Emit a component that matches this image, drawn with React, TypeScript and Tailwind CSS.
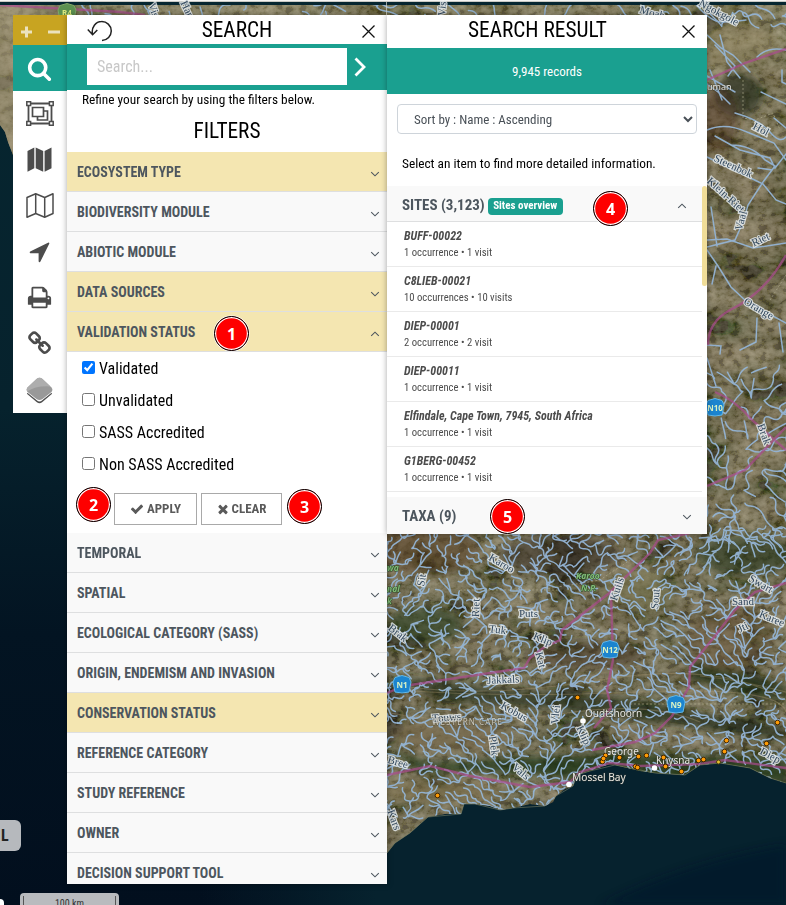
import React from "react";

const CONDENSED = "font-['Roboto_Condensed','Roboto',sans-serif] font-stretch-condensed";

/* ---------- seeded helpers for the river network ---------- */
function makeRandom(seed: number) {
  let s = seed;
  return () => {
    s = (s * 1664525 + 1013904223) % 4294967296;
    return s / 4294967296;
  };
}

function drainage(x0: number, y0: number, x1: number, y1: number, step: number, seed: number, keep: number) {
  const rnd = makeRandom(seed);
  const cols = Math.ceil((x1 - x0) / step) + 1;
  const rows = Math.ceil((y1 - y0) / step) + 1;
  const nodes: { x: number; y: number; h: number }[] = [];
  for (let r = 0; r < rows; r++)
    for (let c = 0; c < cols; c++) {
      const x = x0 + c * step + (rnd() - 0.5) * step * 0.8;
      const y = y0 + r * step + (rnd() - 0.5) * step * 0.8;
      const h = Math.sin(x / 31) * 1.6 + Math.cos(y / 37 + x / 80) * 1.4 - y / 70 + rnd() * 1.3;
      nodes.push({ x, y, h });
    }
  let d = "";
  for (let r = 0; r < rows; r++)
    for (let c = 0; c < cols; c++) {
      const n = nodes[r * cols + c];
      let best = n;
      for (let dr = -1; dr <= 1; dr++)
        for (let dc = -1; dc <= 1; dc++) {
          const rr = r + dr;
          const cc = c + dc;
          if (rr < 0 || cc < 0 || rr >= rows || cc >= cols) continue;
          const m = nodes[rr * cols + cc];
          if (m.h < best.h) best = m;
        }
      if (best === n || rnd() > keep) continue;
      const dx = best.x - n.x;
      const dy = best.y - n.y;
      const k = (rnd() - 0.5) * 0.7;
      d += `M${n.x.toFixed(1)} ${n.y.toFixed(1)}q${(dx * 0.3 - dy * k).toFixed(1)} ${(dy * 0.3 + dx * k).toFixed(1)} ${(dx * 0.6).toFixed(1)} ${(dy * 0.55).toFixed(1)}T${best.x.toFixed(1)} ${best.y.toFixed(1)}`;
    }
  return d;
}

const southRivers = drainage(385, 528, 792, 815, 9, 7, 0.97);
const topRivers = drainage(70, 2, 792, 20, 13, 19, 0.4);
const eastRivers = drainage(704, 370, 792, 540, 13, 23, 0.7);

const LAND =
  "M387 5H786V783L770 778 750 768 720 763 700 765 685 775 655 773 640 771 615 765 607 765 590 771 577 775 573 786 565 789 556 796 553 802 545 806 530 804 513 808 500 810 490 806 475 804 464 804 461 814 445 814 428 817 410 833 395 843 387 853ZM0 5H387V20H40L13 155 8 142 5 132 0 125Z";

type River = [number, number, number, string];
const riverNames: River[] = [
  [490, 556, 30, "Karoo"], [420, 586, -80, "Sit"], [475, 617, -88, "Riet"], [519, 613, 0, "Puts"],
  [489, 628, 8, "Tuk"], [534, 635, 22, "Klip"], [539, 652, 75, "Kat"], [487, 680, -3, "Jakkals"],
  [613, 600, -72, "Kuils"], [654, 609, -85, "Sout"], [732, 601, 0, "Sand"], [750, 577, 30, "Swart"],
  [760, 613, 22, "Karee"], [738, 629, -25, "Jti"], [390, 626, 38, "Brak"], [432, 718, -4, "Touws"],
  [502, 704, 30, "Kobus"], [554, 724, -84, "Vlei"], [493, 736, 82, "Plek"], [580, 726, 65, "Klip"],
  [388, 759, 15, "Bree"], [514, 765, 40, "Vals"], [761, 750, 28, "Diep"], [391, 810, 70, "Kars"],
  [700, 2, 28, "Ngokgole"], [754, 125, 28, "Hol"], [715, 157, 25, "Steenbok"], [709, 179, 42, "Klein-Riet"],
  [738, 230, -75, "Vaal"], [752, 243, -25, "Riet"], [745, 300, 30, "Orange"], [761, 424, 70, "Brak"],
  [640, 9, 15, "Moab"], [152, 3, 72, "Vis"], [184, 1, 65, "Ham"], [441, 16, -85, "Vis"],
];

const sites: [number, number][] = [
  [577, 697], [437, 795], [605, 755], [602, 761], [603, 758], [619, 757], [638, 756], [646, 755], [663, 757],
  [665, 766], [635, 766], [637, 767], [681, 771], [698, 760], [703, 759], [724, 751], [726, 740], [766, 743], [777, 722],
];

function Shield({ x, y, label, green = false }: { x: number; y: number; label: string; green?: boolean }) {
  return (
    <g transform={`translate(${x} ${y})`}>
      <path
        d="M-7-7.500L0-9.500 7-7.500 9-3 7 7Q0 9-7 7L-9-3Z"
        fill={green ? "#5c9150" : "#1b84cf"}
        stroke={green ? "#7fa567" : "#62b6e6"}
        strokeWidth="1"
      />
      <text y="2.500" textAnchor="middle" className="font-['Noto_Sans',sans-serif] text-[8px] font-bold" fill={green ? "#dce97f" : "#d9f2c4"}>
        {label}
      </text>
    </g>
  );
}

function MapCanvas() {
  return (
    <svg className="absolute inset-0" width="786" height="905" viewBox="0 0 786 905">
      <defs>
        <linearGradient id="sea" x1="0" y1="0" x2="0" y2="1">
          <stop offset="0" stopColor="#062630" />
          <stop offset=".45" stopColor="#06222d" />
          <stop offset=".7" stopColor="#031422" />
          <stop offset="1" stopColor="#020f1e" />
        </linearGradient>
        <linearGradient id="shelf" x1="0" y1="0" x2="1" y2="0">
          <stop offset="0" stopColor="#06222e" stopOpacity="0" />
          <stop offset=".3" stopColor="#06222e" />
          <stop offset="1" stopColor="#06222e" />
        </linearGradient>
        <linearGradient id="soil" x1="0" y1="0" x2="0" y2="1">
          <stop offset="0" stopColor="#706a4c" />
          <stop offset=".2" stopColor="#554b33" />
          <stop offset=".5" stopColor="#5b523a" />
          <stop offset=".75" stopColor="#504a35" />
          <stop offset="1" stopColor="#57513b" />
        </linearGradient>
        <filter id="relief" x="0" y="0" width="100%" height="100%">
          <feTurbulence type="fractalNoise" baseFrequency="0.022 0.032" numOctaves="6" seed="11" />
          <feColorMatrix values="1.5 0 0 0 -.45  1.25 .15 0 0 -.43  .95 .1 0 0 -.37  0 0 0 0 1" />
        </filter>
        <filter id="grain" x="0" y="0" width="100%" height="100%">
          <feTurbulence type="fractalNoise" baseFrequency="0.12 0.16" numOctaves="4" seed="4" />
          <feColorMatrix values="1.8 0 0 0 -.6  1.8 0 0 0 -.6  1.6 0 0 0 -.6  0 0 0 0 1" />
        </filter>
        <filter id="soft" x="-20%" y="-50%" width="140%" height="200%">
          <feGaussianBlur stdDeviation="4" />
        </filter>
        <clipPath id="land">
          <path d={LAND} />
        </clipPath>
      </defs>
      <rect width="786" height="905" fill="url(#sea)" />
      <rect x="200" y="700" width="586" height="205" fill="url(#shelf)" />
      <path d="M600 905Q690 860 786 845V905Z" fill="#031729" opacity=".6" filter="url(#soft)" />
      <g clipPath="url(#land)">
        <rect width="786" height="905" fill="url(#soil)" />
        <rect width="786" height="905" filter="url(#relief)" opacity=".36" />
        <rect width="786" height="905" filter="url(#grain)" opacity=".2" />
        <rect x="0" y="0" width="60" height="160" fill="#a69a7b" opacity=".5" />
        <g filter="url(#soft)">
          <ellipse cx="738" cy="95" rx="24" ry="22" fill="#22291f" opacity=".65" />
          <ellipse cx="718" cy="120" rx="20" ry="32" fill="#51371f" opacity=".45" />
          <ellipse cx="730" cy="45" rx="50" ry="22" fill="#94875f" opacity=".35" />
          <ellipse cx="425" cy="550" rx="55" ry="25" fill="#54391f" opacity=".55" />
          <ellipse cx="425" cy="625" rx="38" ry="18" fill="#293b1d" opacity=".6" />
          <ellipse cx="560" cy="555" rx="60" ry="20" fill="#302c1b" opacity=".55" />
          <ellipse cx="640" cy="590" rx="35" ry="22" fill="#78744f" opacity=".55" />
          <ellipse cx="585" cy="655" rx="60" ry="14" fill="#403221" opacity=".5" />
          <ellipse cx="730" cy="640" rx="45" ry="28" fill="#67543a" opacity=".5" />
          <ellipse cx="745" cy="555" rx="50" ry="20" fill="#283820" opacity=".6" />
          <ellipse cx="450" cy="735" rx="60" ry="17" fill="#7b6d50" opacity=".65" />
          <ellipse cx="440" cy="792" rx="65" ry="12" fill="#7c6d49" opacity=".6" />
          <path d="M387 746L430 764 520 757 620 754 786 758V784H610L520 772 420 772Z" fill="#233919" opacity=".8" />
          <path d="M390 675L510 690 620 697 690 712 786 726V740L670 724 560 710 440 700Z" fill="#252f19" opacity=".7" />
          <path d="M690 660L786 685V702L690 680Z" fill="#263419" opacity=".8" />
        </g>
        <g fill="none" stroke="#b09c75" strokeWidth="1.2" opacity=".35">
          <path d="M390 684Q480 700 600 680T786 700M400 690Q500 698 640 692T786 712M390 713Q470 728 560 714T700 722M700 676Q740 680 786 692" />
        </g>
        <g fill="none" stroke="#b6b292" strokeWidth="1" strokeDasharray="2 2" opacity=".6">
          <path d="M743 80V118L755 120 773 113 780 130M786 275L770 300M540 590L600 580 630 560M630 704H786M460 590H560" />
        </g>
        <g fill="none" stroke="#94b4d4" strokeWidth="1.5" strokeLinecap="round" opacity=".95">
          <path d={southRivers} />
          <path d={topRivers} />
          <path d={eastRivers} />
          <path d="M694 2Q710 22 722 22T746 20M707 35L721 48 733 55 750 72M715 45L735 66 728 76M720 35L727 62 740 78M707 84L718 92 730 104M707 76L735 92M710 70L722 100M757 57Q768 46 786 50M761 92L786 104M782 70V82L786 84" />
          <path d="M735 113Q760 120 770 132T786 137M707 130Q725 122 747 132L774 143 786 160M715 136L740 150 770 158 775 168 786 154M731 145Q752 145 765 160L775 166M758 168L772 170M775 166L763 182 748 205 743 222 735 240 707 247M707 157L738 172 763 184M774 118L786 128M763 184L776 200 786 204" />
          <path d="M707 250L718 266 731 287 747 302 786 323M711 207L717 246M716 266L712 284M757 318L756 342 740 350M779 323L783 352M707 240L727 239 753 248 786 243M707 358L716 386M707 345L721 346 720 354" />
        </g>
        <g fill="none" stroke="#a94c8d" strokeWidth="2.4" opacity=".7">
          <path d="M387 693L404 686 470 676 524 668 530 658 543 648 560 640 562 630 608 594 650 553 658 540 690 533M611 594L613 660 607 690 611 708 594 728M786 583L755 592 735 610 715 636 690 667 689 687 672 716 655 733 635 742 592 750M387 775L430 766 470 776 530 787 570 782 580 772 610 763 640 766 700 764 725 760 786 768" />
          <path d="M0 5L120 12 145 15M707 80L745 63 786 49M786 255Q765 293 730 310 708 322 708 345M715 392Q735 400 752 420L786 450M707 486L745 470 786 427" />
        </g>
      </g>
      <path d="M786 783L770 778 750 768 720 763 700 765 685 775 655 773 615 765 590 771 577 775 573 786 556 796 545 806 513 808 500 810 475 804 464 804 461 814 428 817 410 833 395 843 387 853" fill="none" stroke="#82866a" strokeWidth="1" opacity=".55" />
      <path d="M0 .5H786" stroke="#f6f6f4" strokeWidth="1" />
      <path d="M0 1.500H786" stroke="#c9c9c4" strokeWidth="1" />
      <path d="M386.5 2V15" stroke="#d8d8d0" opacity=".7" />
      {riverNames.map(([x, y, a, name], i) => (
        <text
          key={i}
          transform={`translate(${x} ${y}) rotate(${a})`}
          y="4"
          className="font-['Liberation_Serif',serif] text-[11px]"
          fill="#33495e"
          stroke="#e4e9ea"
          strokeWidth="2.4"
          strokeOpacity=".85"
          paintOrder="stroke"
        >
          {name}
        </text>
      ))}
      <g className="font-['Noto_Sans',sans-serif] text-[8.5px] font-bold italic" fill="#83bd78" stroke="#284925" strokeWidth="1" paintOrder="stroke">
        <text x="576" y="579">Karoo</text>
        <text x="581" y="591">N.P.</text>
        <text x="387" y="571">wa</text>
        <text x="387" y="592">nal</text>
        <text x="387" y="604">k</text>
      </g>
      <g className="font-['Noto_Sans',sans-serif]" fill="#e6e6e0" stroke="#3a3a30" strokeWidth="1" strokeOpacity=".6" paintOrder="stroke">
        <text x="432" y="725" className="text-[8px] tracking-[1.1px]" opacity=".75">WESTERN CAPE</text>
        <text x="585" y="717" className="text-[10px]">Oudtshoorn</text>
        <text x="604" y="755" className="text-[10px]">George</text>
        <text x="656" y="764" className="text-[10px]">Knysna</text>
        <text x="572" y="781" className="text-[10.2px]">Mossel Bay</text>
        <text x="707" y="90" className="text-[9px]">uman</text>
      </g>
      <Shield x={402} y={685} label="N1" />
      <Shield x={610} y={650} label="N12" />
      <Shield x={676} y={705} label="N9" />
      <Shield x={715} y={408} label="N10" />
      <Shield x={67} y={13} label="R4" green />
      <g fill="#fff">
        <circle cx="583" cy="721" r="2.8" />
        <circle cx="569" cy="784.500" r="2.8" />
        <circle cx="654.500" cy="768" r="2.8" />
      </g>
      {sites.map(([x, y], i) => (
        <circle key={i} cx={x + 0.5} cy={y + 0.5} r="2.3" fill="#ff9c05" stroke="#3b2100" strokeWidth=".9" />
      ))}
      <circle cx="718.500" cy="762" r="2" fill="#e5c02d" stroke="#4c4010" />
    </svg>
  );
}

/* ---------- icons ---------- */
const GLYPH = {
  search: "M1216 832q0-185-131.5-316.5t-316.5-131.5-316.5 131.5-131.5 316.5 131.5 316.5 316.5 131.5 316.5-131.5 131.5-316.5zm512 832q0 52-38 90t-90 38q-54 0-90-38l-343-342q-179 124-399 124-143 0-273.5-55.5t-225-150-150-225-55.5-273.5 55.5-273.5 150-225 225-150 273.5-55.5 273.5 55.5 225 150 150 225 55.5 273.5q0 220-124 399l343 343q37 37 37 90z",
  arrow: "M1593 349l-640 1280q-17 35-57 35-5 0-15-2-22-5-35.5-22.5t-13.5-39.5v-576h-576q-22 0-39.5-13.5t-22.5-35.5 4-42 29-30l1280-640q13-7 29-7 27 0 45 19 15 14 18.5 34.5t-6.5 39.5z",
  print: "M448 1536h896v-256h-896v256zm0-640h896v-384h-160q-40 0-68-28t-28-68v-160h-640v640zm1152 64q0-26-19-45t-45-19-45 19-19 45 19 45 45 19 45-19 19-45zm128 0v416q0 13-9.5 22.5t-22.5 9.5h-224v160q0 40-28 68t-68 28h-960q-40 0-68-28t-28-68v-160h-224q-13 0-22.5-9.5t-9.5-22.5v-416q0-79 56.5-135.5t135.5-56.5h64v-544q0-40 28-68t68-28h672q40 0 88 20t76 48l152 152q28 28 48 76t20 88v256h64q79 0 135.5 56.5t56.5 135.5z",
  link: "M1520 1216q0-40-28-68l-208-208q-28-28-68-28-42 0-72 32 3 3 19 18.5t21.500 21.500 15 19 13 25.500 3.500 27.500q0 40-28 68t-68 28q-15 0-27.500-3.500t-25.500-13-19-15-21.500-21.500-18.500-19q-33 31-33 73 0 40 28 68l206 207q27 27 68 27 40 0 68-26l147-146q28-28 28-67zm-703-705q0-40-28-68l-206-207q-28-28-68-28-39 0-68 27l-147 146q-28 28-28 67 0 40 28 68l208 208q27 27 68 27 42 0 72-31-3-3-19-18.500t-21.500-21.500-15-19-13-25.500-3.500-27.500q0-40 28-68t68-28q15 0 27.500 3.500t25.500 13 19 15 21.500 21.500 18.500 19q33-31 33-73zm895 705q0 120-85 203l-147 146q-83 83-203 83-121 0-204-85l-206-207q-83-83-83-203 0-123 88-209l-88-88q-86 88-208 88-120 0-204-84l-208-208q-84-84-84-204t85-203l147-146q83-83 203-83 121 0 204 85l206 207q83 83 83 203 0 123-88 209l88 88q86-88 208-88 120 0 204 84l208 208q84 84 84 204z",
  check: "M1671 566q0 40-28 68l-724 724-136 136q-28 28-68 28t-68-28l-136-136-362-362q-28-28-28-68t28-68l136-136q28-28 68-28t68 28l294 295 656-657q28-28 68-28t68 28l136 136q28 28 28 68z",
  times: "M1490 1322q0 40-28 68l-136 136q-28 28-68 28t-68-28l-294-294-294 294q-28 28-68 28t-68-28l-136-136q-28-28-28-68t28-68l294-294-294-294q-28-28-28-68t28-68l136-136q28-28 68-28t68 28l294 294 294-294q28-28 68-28t68 28l136 136q28 28 28 68t-28 68l-294 294 294 294q28 28 28 68z",
};

function Glyph({ name, size }: { name: keyof typeof GLYPH; size: number }) {
  return (
    <svg width={size} height={size} viewBox="0 0 1792 1792" fill="currentColor" className="shrink-0">
      <path d={GLYPH[name]} />
    </svg>
  );
}

function Chevron({ up = false }: { up?: boolean }) {
  return (
    <svg width="10" height="6" viewBox="0 0 10 6" fill="none" stroke="#4d565e" strokeWidth="1.1" className="shrink-0">
      <path d={up ? "M1.200 4.800L5 1.200l3.800 3.600" : "M1.200 1.200L5 4.800l3.800-3.600"} />
    </svg>
  );
}

function Cross() {
  return (
    <svg width="13" height="13" viewBox="0 0 13 13" stroke="#111" strokeWidth="1.3">
      <path d="M.5.5l12 12M12.500.5l-12 12" />
    </svg>
  );
}

function Marker({ n, className }: { n: number; className: string }) {
  return (
    <div
      className={`absolute z-20 flex size-[35px] items-center justify-center rounded-full border-[1.5px] border-black bg-[#fe0000] font-['Noto_Sans',sans-serif] text-base font-bold text-white shadow-[inset_0_0_0_1.200px_#fff,0_0_0_0.5px_#fff] ${className}`}
    >
      {n}
    </div>
  );
}

function Toolbar() {
  const cell = "flex items-center justify-center pr-px";
  return (
    <nav className="flex h-[398px] w-[54px] flex-col bg-white text-[#4c4c4c]">
      <div className="flex h-[30px] items-center justify-around bg-[#c8a421] pt-1">
        <svg width="12" height="12" viewBox="0 0 12 12" stroke="#ebe2bd" strokeWidth="3">
          <path d="M0 6h11M5.500 .5v11" />
        </svg>
        <svg width="12" height="12" viewBox="0 0 12 12" stroke="#ebe2bd" strokeWidth="3">
          <path d="M0 6h12" />
        </svg>
      </div>
      <div className={`${cell} h-[46px] bg-[#1aa090] text-white`}>
        <Glyph name="search" size={25} />
      </div>
      <div className={`${cell} h-[46px] pb-0.5`}>
        <svg width="28" height="25" viewBox="0 0 28 25" fill="none" stroke="currentColor" strokeWidth="1.500">
          <path d="M4.500 2.500h19M4.500 22.500h19M2.500 4.500v16M25.500 4.500v16" strokeWidth="1.800" />
          <path d="M.8.8h3.800v3.800H.8zM23.400.8h3.800v3.800h-3.800zM.8 20.400h3.800v3.800H.8zM23.400 20.400h3.800v3.800h-3.800z" />
          <path d="M6.500 6.500h11v9h-11zM17.500 10h4v9h-10v-3.500" strokeWidth="1.700" />
        </svg>
      </div>
      <div className={`${cell} h-[46px] pb-0.5`}>
        <svg width="25" height="25" viewBox="0 0 25 25" fill="currentColor">
          <path d="M.5 4L7.300.5v20.700L.5 24.700zM8.700.5l7.500 3.500v20.700L8.700 21.200zM17.600 4L24.500.5v20.700l-6.900 3.500z" />
        </svg>
      </div>
      <div className={`${cell} h-[46px] pb-0.5`}>
        <svg width="28" height="25" viewBox="0 0 28 25" fill="none" stroke="currentColor" strokeWidth="1.500" strokeLinejoin="round">
          <path d="M1 4.500L9.700.8l9 3.700L27 .8v19.700l-8.300 3.700-9-3.700L1 24.200zM9.700.8v19.700M18.700 4.500v19.700" />
        </svg>
      </div>
      <div className={`${cell} h-[46px] pb-0.5`}>
        <Glyph name="arrow" size={25} />
      </div>
      <div className={`${cell} h-[45px]`}>
        <Glyph name="print" size={25} />
      </div>
      <div className={`${cell} h-[45px] pt-0.5`}>
        <Glyph name="link" size={25} />
      </div>
      <div className={`${cell} h-[48px] pt-0.5`}>
        <svg width="27" height="27" viewBox="0 0 27 27">
          <path d="M1.500 16l10 8.500q2 1.500 4 0l10-8.500" fill="none" stroke="#505050" strokeWidth="2" />
          <path d="M1.500 15l10 8q2 1.500 4 0l10-8" fill="none" stroke="#fff" strokeWidth="1.200" />
          <path d="M1.500 10.500l9-8.500q3-2.500 6 0l9 8.500q1.800 2.300 0 4.500l-9 7q-3 2.200-6 0l-9-7q-1.800-2.200 0-4.500z" fill="#999" />
          <path d="M1 11.300q0-.5.500-.8l9-8.500q3-2.500 6 0l8 7.500Q10 8.500 1.300 14.500.5 13 1 11.300z" fill="#adadad" />
        </svg>
      </div>
    </nav>
  );
}

function FilterRow({ label, gold, open }: { label: string; gold?: boolean; open?: boolean }) {
  return (
    <div className={`flex h-10 shrink-0 items-center justify-between border-b border-[#dedfe0] pl-2.5 pr-[7px] ${gold ? "bg-[#f4e6b1]" : "bg-[#f9f9f9]"}`}>
      <span className="text-[14px] font-bold leading-none text-[#4d565e]">{label}</span>
      <span className="pt-1">
        <Chevron up={open} />
      </span>
    </div>
  );
}

const statuses = ["Validated", "Unvalidated", "SASS Accredited", "Non SASS Accredited"];
const lower = ["TEMPORAL", "SPATIAL", "ECOLOGICAL CATEGORY (SASS)", "ORIGIN, ENDEMISM AND INVASION", "CONSERVATION STATUS", "REFERENCE CATEGORY", "STUDY REFERENCE", "OWNER", "DECISION SUPPORT TOOL"];

function SearchPanel() {
  return (
    <section className="relative flex h-[869px] w-80 flex-col overflow-hidden bg-white shadow-[0_0_6px_rgba(0,0,0,0.35)]">
      <header className="flex h-[29px] shrink-0 items-center justify-between pl-5 pr-3">
        <svg width="25" height="22" viewBox="0 0 25 22" fill="none" stroke="#222" strokeWidth="1.500" className="mt-0.5">
          <path d="M5.500 14.500C4 7 9 1.500 14.500 1.500A9 9 0 0 1 15 20.500M.8 9.500l4.800 5.200 4.700-4.800" />
        </svg>
        <h1 className="text-[21.330px] leading-none">SEARCH</h1>
        <div className="pt-[3px]"><Cross /></div>
      </header>
      <div className="flex h-[46px] shrink-0 items-start bg-[#1aa090] pl-5 pt-1">
        <input className="h-[37px] w-[260px] bg-white px-2.5 text-base outline-none placeholder:text-[#c8c8c8]" placeholder="Search..." />
        <svg width="12" height="20" viewBox="0 0 12 20" fill="none" stroke="#fff" strokeWidth="2.800" className="ml-[7px] mt-[9px]">
          <path d="M1.500 1.500L10 10l-8.500 8.500" />
        </svg>
      </div>
      <p className="mt-[3px] shrink-0 pl-[15px] text-[13.330px] leading-[14px]">Refine your search by using the filters below.</p>
      <h2 className="mt-[11px] h-[34px] shrink-0 text-center text-[21.330px] leading-[26px]">FILTERS</h2>
      <FilterRow label="ECOSYSTEM TYPE" gold />
      <FilterRow label="BIODIVERSITY MODULE" />
      <FilterRow label="ABIOTIC MODULE" />
      <FilterRow label="DATA SOURCES" gold />
      <FilterRow label="VALIDATION STATUS" gold open />
      <div className="h-[181px] shrink-0 pl-[15px]">
        {statuses.map((s, i) => (
          <label key={s} className="flex h-8 items-center gap-1 text-base">
            <input type="checkbox" defaultChecked={i === 0} className="mb-[2px] size-[13px]" />
            <span className="pt-0.5">{s}</span>
          </label>
        ))}
        <div className="mt-[13px] flex gap-1 pl-8 text-[13px] font-bold text-[#5a5a5a]">
          <button className="flex h-8 w-[83px] items-center justify-center gap-[3px] border border-[#a9a9a9]">
            <Glyph name="check" size={14} />APPLY
          </button>
          <button className="flex h-8 w-[81px] items-center justify-center gap-0.5 border border-[#a9a9a9] pr-px">
            <Glyph name="times" size={14} />CLEAR
          </button>
        </div>
      </div>
      {lower.map((l) => (
        <FilterRow key={l} label={l} gold={l === "CONSERVATION STATUS"} />
      ))}
    </section>
  );
}

const results = [
  ["BUFF-00022", "1 occurrence • 1 visit"],
  ["C8LIEB-00021", "10 occurrences • 10 visits"],
  ["DIEP-00001", "2 occurrence • 2 visit"],
  ["DIEP-00011", "1 occurrence • 1 visit"],
  ["Elfindale, Cape Town, 7945, South Africa", "1 occurrence • 1 visit"],
  ["G1BERG-00452", "1 occurrence • 1 visit"],
];

function ResultPanel() {
  return (
    <section className="relative flex h-[519px] w-80 flex-col bg-white shadow-[0_0_6px_rgba(0,0,0,0.35)]">
      <header className="flex h-[33px] shrink-0 items-start pl-[81px] pr-3">
        <h1 className="grow pt-1 text-[21.330px] leading-[22px]">SEARCH RESULT</h1>
        <div className="pt-2.5"><Cross /></div>
      </header>
      <div className="flex h-[46px] shrink-0 items-center justify-center bg-[#1aa090] pt-px text-[13px] text-white">9,945 records</div>
      <select className="mx-2.5 mt-2.5 h-[30px] shrink-0 rounded border border-[#ced4da] bg-white px-3 text-[13px] text-[#495057]">
        <option>Sort by : Name : Ascending</option>
      </select>
      <p className="mt-[22px] h-[30px] shrink-0 pl-[15px] text-[13.330px] leading-[15px]">Select an item to find more detailed information.</p>
      <div className="flex grow">
        <div className="w-[315px]">
          <div className="flex h-9 items-center border-b border-[#dedfe0] bg-[#f9f9f9] pl-[15px] pr-[15px]">
            <span className="pt-[3px] text-[15px] font-bold text-[#4d565e]">SITES (3,123)</span>
            <span className="ml-[3px] mt-1.5 flex h-[17px] w-[75px] items-center justify-center rounded bg-[#1aa090] text-[11px] font-bold text-white">Sites overview</span>
            <span className="ml-auto pt-1"><Chevron up /></span>
          </div>
          {results.map(([name, detail]) => (
            <div key={name} className="h-[45px] border-b border-[#eaeaea] pl-[17px] pt-[7px] text-[#4c4c4c]">
              <div className="text-[12px] font-bold italic leading-[14px]">{name}</div>
              <div className="mt-0.5 text-[10.670px] leading-[15px]">{detail}</div>
            </div>
          ))}
        </div>
        <div className="h-[100px] w-[5px] rounded bg-[#f0dd98]" />
      </div>
      <div className="flex h-[37px] shrink-0 items-center justify-between bg-[#f9f9f9] pl-[15px] pr-[15px] pt-0.5">
        <span className="text-[15px] font-bold text-[#4d565e]">TAXA (9)</span>
        <Chevron />
      </div>
    </section>
  );
}

export default function App() {
  return (
    <main className={`relative h-[905px] w-[786px] overflow-hidden text-black ${CONDENSED}`}>
      <MapCanvas />
      <div className="relative flex items-start pl-[13px] pt-[15px]">
        <Toolbar />
        <SearchPanel />
        <ResultPanel />
      </div>
      <div className="absolute -left-2 top-[820px] flex h-[31px] w-[29px] items-center rounded-md bg-[#b6b9bd] pl-[9px] text-base font-bold text-[#222]">L</div>
      <div className="absolute left-5 top-[893px] flex h-5 w-[99px] justify-center rounded bg-[#b9bbbe] px-[3px] pt-[3px]">
        <div className="h-4 w-full border-x border-[#555] text-center text-[10px] leading-[15px] text-[#333]">100 km</div>
      </div>
      <div className="absolute left-0 top-[899px] h-1.5 w-1 rounded-tr-sm bg-white" />
      <Marker n={1} className="left-[214px] top-[316px]" />
      <Marker n={2} className="left-[76px] top-[487px]" />
      <Marker n={3} className="left-[287px] top-[489px]" />
      <Marker n={4} className="left-[593px] top-[191px]" />
      <Marker n={5} className="left-[490px] top-[499px]" />
    </main>
  );
}
